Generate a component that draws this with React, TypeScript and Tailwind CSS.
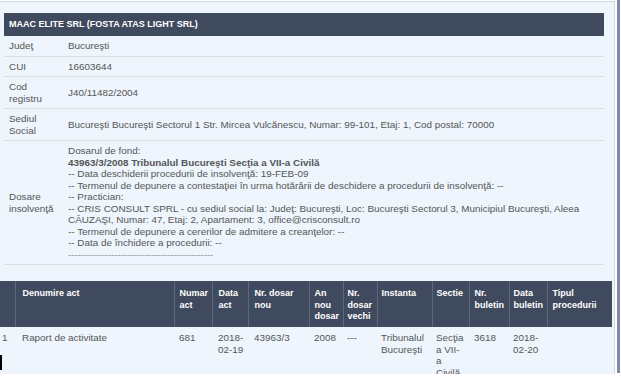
import React from "react";

const rows: { label: string; value: React.ReactNode }[] = [
  { label: "Judeţ", value: "Bucureşti" },
  { label: "CUI", value: "16603644" },
  { label: "Cod registru", value: "J40/11482/2004" },
  {
    label: "Sediul Social",
    value:
      "Bucureşti Bucureşti Sectorul 1 Str. Mircea Vulcănescu, Numar: 99-101, Etaj: 1, Cod postal: 70000",
  },
];

const dosare = (
  <div>
    <div>Dosarul de fond:</div>
    <div className="font-bold">43963/3/2008 Tribunalul Bucureşti Secţia a VII-a Civilă</div>
    <div>-- Data deschiderii procedurii de insolvenţă: 19-FEB-09</div>
    <div>
      -- Termenul de depunere a contestaţiei în urma hotărârii de deschidere a procedurii de insolvenţă: --
    </div>
    <div>-- Practician:</div>
    <div>
      -- CRIS CONSULT SPRL - cu sediul social la: Judeţ: Bucureşti, Loc: Bucureşti Sectorul 3, Municipiul Bucureşti, Aleea
      <br />
      CĂUZAŞI, Numar: 47, Etaj: 2, Apartament: 3, office@crisconsult.ro
    </div>
    <div>-- Termenul de depunere a cererilor de admitere a creanţelor: --</div>
    <div>-- Data de închidere a procedurii: --</div>
    <div className="text-[#8f959b] tracking-[-0.2px]">-----------------------------------------------</div>
  </div>
);

const cols: { w: number; head: React.ReactNode; cell: React.ReactNode; pl: string }[] = [
  { w: 15, head: "", cell: "1", pl: "pl-[2px]" },
  { w: 159, head: "Denumire act", cell: "Raport de activitate", pl: "pl-[7px]" },
  { w: 38, head: <>Numar<br />act</>, cell: "681", pl: "pl-[5px]" },
  { w: 36, head: <>Data<br />act</>, cell: <>2018-<br />02-19</>, pl: "pl-[6px]" },
  { w: 61, head: <>Nr. dosar<br />nou</>, cell: "43963/3", pl: "pl-[6px]" },
  { w: 34, head: <>An<br />nou<br />dosar</>, cell: "2008", pl: "pl-[5px]" },
  { w: 34, head: <>Nr.<br />dosar<br />vechi</>, cell: "---", pl: "pl-[4px]" },
  { w: 55, head: "Instanta", cell: <>Tribunalul<br />Bucureşti</>, pl: "pl-[4px]" },
  { w: 37, head: "Sectie", cell: <>Secţia<br />a VII-<br />a<br />Civilă</>, pl: "pl-[4px]" },
  { w: 40, head: <>Nr.<br />buletin</>, cell: "3618", pl: "pl-[5px]" },
  { w: 38, head: <>Data<br />buletin</>, cell: <>2018-<br />02-20</>, pl: "pl-[4px]" },
  { w: 65, head: <>Tipul<br />procedurii</>, cell: "", pl: "pl-[5px]" },
];

export default function App() {
  return (
    <div className="relative w-[621px] h-[389px] bg-white overflow-hidden font-['Liberation_Sans',Arial,sans-serif] text-[9.9px] leading-[11.5px] text-[#555]">
      <div className="flex h-[373px]">
        <div className="w-[615px] h-[373px] mt-px border-t border-r border-[#cfd6de] bg-[#eef5fd] overflow-hidden">
          {/* company panel */}
          <div className="ml-[4px] mt-[11px] w-[600px]">
            <div className="h-[23px] bg-[#3f4a5e] text-white font-bold text-[9px] flex items-center pl-[5px]">
              MAAC ELITE SRL (FOSTA ATAS LIGHT SRL)
            </div>
            {rows.map((r) => (
              <div key={r.label} className="flex items-center border-b border-[#d9dee4] py-[4px]">
                <div className="w-[60px] shrink-0 pl-[5px] pr-[8px]">{r.label}</div>
                <div className="pl-[4px]">{r.value}</div>
              </div>
            ))}
            <div className="flex items-center border-b border-[#d9dee4] py-[4px]">
              <div className="w-[60px] shrink-0 pl-[5px] pr-[6px]">Dosare insolvenţă</div>
              <div className="pl-[4px]">{dosare}</div>
            </div>
          </div>

          {/* acts table */}
          <table className="mt-[16px] table-fixed border-collapse w-[612px]">
            <colgroup>
              {cols.map((c, i) => (
                <col key={i} style={{ width: c.w }} />
              ))}
            </colgroup>
            <thead>
              <tr className="h-[46px] bg-[#3f4a5e]">
                {cols.map((c, i) => (
                  <th
                    key={i}
                    className={`align-top text-left pt-[7px] ${c.pl} pr-0 text-white font-bold text-[9px] leading-[11.5px] whitespace-nowrap overflow-hidden ${i > 0 ? "border-l border-[#5e687b]" : ""}`}
                  >
                    {c.head}
                  </th>
                ))}
              </tr>
            </thead>
            <tbody>
              <tr>
                {cols.map((c, i) => (
                  <td key={i} className={`align-top pt-[5px] ${c.pl} whitespace-nowrap`}>
                    {c.cell}
                  </td>
                ))}
              </tr>
            </tbody>
          </table>
        </div>
        <div className="w-[2px]" />
        <div className="w-[3px] h-[373px] bg-[#7d8ca4]" />
      </div>
      <div className="absolute left-0 top-[355px] w-[2px] h-[15px] bg-black" />
    </div>
  );
}
